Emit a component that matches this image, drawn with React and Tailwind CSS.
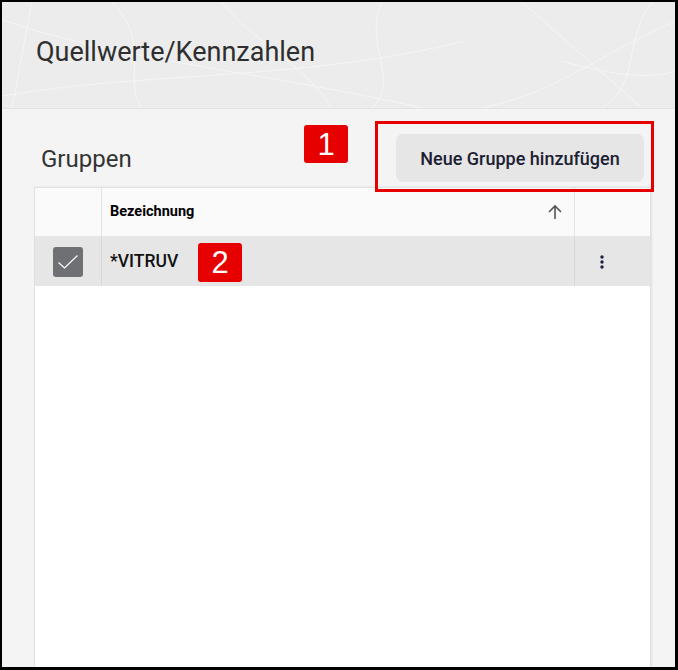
import React from "react";

function HeaderLines() {
  return (
    <svg className="absolute inset-0 h-full w-full" viewBox="0 0 673 107" preserveAspectRatio="none">
      <g stroke="#ffffff" strokeWidth="1" fill="none" opacity="0.5">
        <path d="M0 18 C 120 60, 260 70, 420 107" />
        <path d="M30 0 L 10 107" />
        <path d="M110 0 C 150 40, 120 80, 140 107" />
        <path d="M0 95 C 140 70, 300 80, 460 40" />
        <path d="M380 0 C 360 40, 400 80, 370 107" />
        <path d="M520 0 L 640 107" />
        <path d="M673 20 C 600 50, 560 90, 480 107" />
        <path d="M650 0 C 620 40, 640 80, 600 107" />
        <path d="M220 0 C 250 40, 300 60, 330 107" />
        <path d="M560 60 C 600 70, 640 80, 673 70" />
      </g>
    </svg>
  );
}

function CheckBox() {
  return (
    <div className="flex h-[30px] w-[30px] items-center justify-center rounded-[3px] bg-[#6e7074]">
      <svg width="22" height="16" viewBox="0 0 22 16" fill="none">
        <path d="M1.5 8.5 L7.5 14 L20.5 1.5" stroke="#ffffff" strokeWidth="1.1" />
      </svg>
    </div>
  );
}

function Badge({ children, className }) {
  return (
    <div
      className={
        "absolute flex items-center justify-center rounded-[3px] bg-[#e60000] text-[31px] leading-none text-white " +
        className
      }
      style={{ fontFamily: '"Liberation Sans", Arial, sans-serif' }}
    >
      {children}
    </div>
  );
}

export default function App() {
  return (
    <div
      className="relative flex h-[670px] w-[678px] flex-col overflow-hidden border-t-[2px] border-l-[2px] border-r-[3px] border-b-[3px] border-black bg-[#f4f4f4] text-[#2b2b2b]"
      style={{ fontFamily: 'Roboto, "Noto Sans", sans-serif' }}
    >
      {/* page header */}
      <div className="relative h-[107px] shrink-0 border-b border-[#e2e2e2] bg-[#ececec]">
        <HeaderLines />
        <div className="relative pl-[34px] pt-[34px] text-[27px] leading-[32px] text-[#2e2e2e]">
          Quellwerte/Kennzahlen
        </div>
      </div>

      {/* groups section */}
      <div className="flex flex-1 flex-col pl-[32px] pr-[24px]">
        <div className="mb-[5px] mt-[25px] flex h-[48px] items-center justify-between pl-[7px] pr-[7px]">
          <div className="pt-[1px] text-[24px] leading-[28px] text-[#333333]">Gruppen</div>
          <button className="h-[48px] w-[248px] rounded-[7px] bg-[#e6e6e6] text-[18px] font-medium text-[#1c2033]">
            Neue Gruppe hinzufügen
          </button>
        </div>

        {/* groups table */}
        <div className="flex flex-1 flex-col border-l border-r border-t border-[#e0e0e0] bg-white shadow-[1px_0_2px_rgba(0,0,0,0.08)]">
          <div className="flex h-[49px] border-b border-[#e6e6e6] bg-[#fafafa]">
            <div className="w-[67px] border-r border-[#e4e4e4]" />
            <div className="flex flex-1 items-center justify-between border-r border-[#e4e4e4] pl-[8px] pr-[11px]">
              <span className="text-[14.5px] font-bold text-black">Bezeichnung</span>
              <svg width="16" height="16" viewBox="0 0 16 16" fill="none">
                <path d="M8 15 V2 M2 8 L8 2 L14 8" stroke="#555555" strokeWidth="1.6" />
              </svg>
            </div>
            <div className="w-[75px]" />
          </div>
          <div className="relative flex h-[49px] bg-[#e6e6e6]">
            <div className="flex w-[67px] items-center justify-center border-r border-[#d8d8d8] pr-[1px]">
              <CheckBox />
            </div>
            <div className="flex flex-1 items-center border-r border-[#d8d8d8] pl-[8px]">
              <span className="text-[17.5px] font-medium text-[#111111]">*VITRUV</span>
            </div>
            <div className="flex w-[75px] items-center pl-[25px]">
              <svg width="4" height="14" viewBox="0 0 4 14">
                <circle cx="2" cy="2" r="1.7" fill="#1c2145" />
                <circle cx="2" cy="7" r="1.7" fill="#1c2145" />
                <circle cx="2" cy="12" r="1.7" fill="#1c2145" />
              </svg>
            </div>
          </div>
        </div>
      </div>

      {/* callouts */}
      <Badge className="left-[302px] top-[123px] h-[38px] w-[44px]">1</Badge>
      <div className="absolute left-[373px] top-[119px] h-[71px] w-[279px] border-[3px] border-[#e60000]" />
      <Badge className="left-[196px] top-[241px] h-[39px] w-[44px]">2</Badge>
    </div>
  );
}
